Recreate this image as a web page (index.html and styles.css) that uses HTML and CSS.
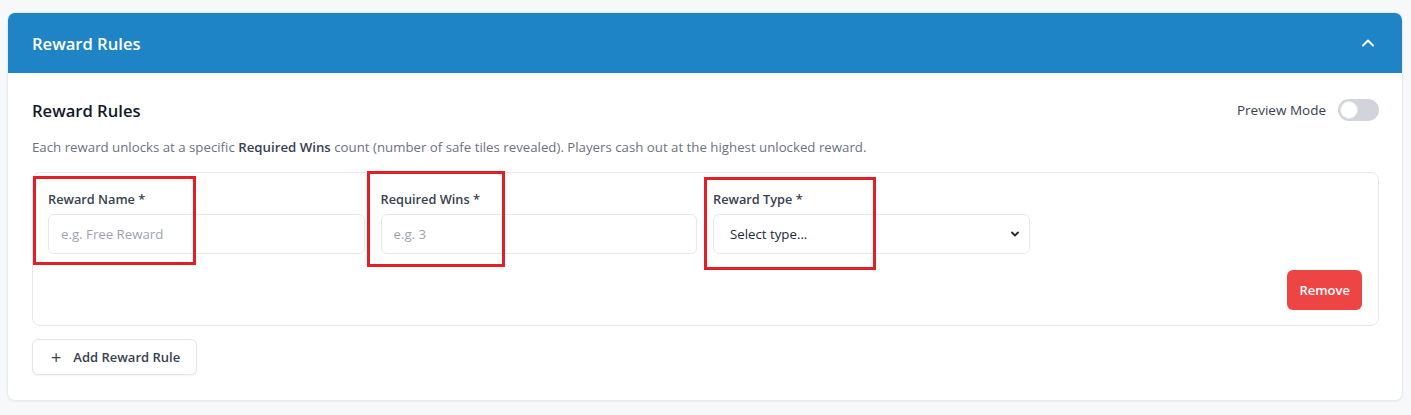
FILE: index.html
```html
<!DOCTYPE html>
<html lang="en">
<head>
<meta charset="utf-8">
<title>Reward Rules</title>
<link rel="stylesheet" href="styles.css">
</head>
<body>
<div class="page">
  <section class="card">
    <header class="card-header">
      <h2 class="card-title">Reward Rules</h2>
      <svg class="chevron" width="16" height="16" viewBox="0 0 16 16" fill="none" stroke="#fff" stroke-width="2" stroke-linecap="round" stroke-linejoin="round"><path d="M3 10.5 8 5.5l5 5"/></svg>
    </header>
    <div class="card-body">
      <div class="title-row">
        <h3 class="section-title">Reward Rules</h3>
        <div class="preview">
          <span class="preview-label">Preview Mode</span>
          <span class="toggle"><span class="knob"></span></span>
        </div>
      </div>
      <p class="desc">Each reward unlocks at a specific <strong>Required Wins</strong> count (number of safe tiles revealed). Players cash out at the highest unlocked reward.</p>
      <div class="rule">
        <div class="fields">
          <div class="field">
            <label class="label">Reward Name *</label>
            <div class="input placeholder">e.g. Free Reward</div>
          </div>
          <div class="field">
            <label class="label">Required Wins *</label>
            <div class="input placeholder">e.g. 3</div>
          </div>
          <div class="field">
            <label class="label">Reward Type *</label>
            <div class="input select">
              <span>Select type...</span>
              <svg width="12" height="12" viewBox="0 0 12 12" fill="none" stroke="#1f2937" stroke-width="1.8" stroke-linecap="round" stroke-linejoin="round"><path d="M3 4.5 6 7.5 9 4.5"/></svg>
            </div>
          </div>
        </div>
        <div class="actions">
          <button class="btn-remove">Remove</button>
        </div>
      </div>
      <button class="btn-add"><span class="plus">+</span>Add Reward Rule</button>
    </div>
  </section>
  <div class="mark mark-1"></div>
  <div class="mark mark-2"></div>
  <div class="mark mark-3"></div>
</div>
</body>
</html>
```
FILE: styles.css
```css
* { box-sizing: border-box; }
html, body { margin: 0; padding: 0; }
body {
  background: #f7f8fa;
  font-family: "Open Sans", "Noto Sans", sans-serif;
  color: #1f2937;
}
.page {
  position: relative;
  padding: 12px 8px 14px 7px;
}
.card {
  background: #fff;
  border-radius: 8px;
  border: 1px solid #e8eaee;
  box-shadow: 0 1px 2px rgba(0,0,0,0.05);
  overflow: hidden;
}
.card-header {
  background: #1f84c6;
  height: 60px;
  display: flex;
  align-items: center;
  justify-content: space-between;
  padding: 0 26px 0 24px;
}
.card-title {
  margin: 0;
  color: #fff;
  font-size: 16.6px;
  font-weight: 600;
}
.chevron { display: block; }
.card-body {
  padding: 24px 23px 25px 24px;
}
.title-row {
  display: flex;
  align-items: center;
  justify-content: space-between;
  height: 26px;
}
.section-title {
  margin: 0;
  font-size: 16.6px;
  font-weight: 600;
  color: #111827;
}
.preview {
  display: flex;
  align-items: center;
  gap: 12px;
}
.preview-label {
  font-size: 13.5px;
  color: #374151;
}
.toggle {
  width: 41px;
  height: 22px;
  border-radius: 11px;
  background: #d1d5db;
  display: flex;
  align-items: center;
  padding: 2px;
}
.knob {
  width: 18px;
  height: 18px;
  border-radius: 50%;
  background: #fff;
  border: 1px solid #e5e7eb;
}
.desc {
  margin: 14px 0 15px;
  font-size: 13.25px;
  line-height: 20px;
  color: #6b7280;
}
.desc strong { color: #374151; font-weight: 600; }
.rule {
  border: 1px solid #e5e7eb;
  border-radius: 8px;
  padding: 16px 16px 15px 15px;
}
.fields {
  display: grid;
  grid-template-columns: repeat(4, 1fr);
  gap: 16px;
}
.field { display: flex; flex-direction: column; gap: 4px; }
.label {
  font-size: 12.75px;
  line-height: 21px;
  font-weight: 600;
  color: #374151;
}
.input {
  height: 40px;
  border: 1px solid #e5e7eb;
  border-radius: 6px;
  padding: 0 12px;
  display: flex;
  align-items: center;
  font-size: 13.25px;
  background: #fff;
}
.placeholder { color: #9ca3af; }
.select {
  color: #1f2937;
  justify-content: space-between;
  padding-right: 8px;
  padding-left: 16px;
}
.actions {
  display: flex;
  justify-content: flex-end;
  margin-top: 16px;
}
.btn-remove {
  height: 40px;
  padding: 0 12px;
  border: none;
  border-radius: 6px;
  background: #ef4444;
  color: #fff;
  font-family: inherit;
  font-size: 13px;
  font-weight: 600;
}
.btn-add {
  margin-top: 13px;
  height: 36px;
  padding: 0 16px 0 18px;
  border: 1px solid #e1e4e8;
  border-radius: 6px;
  background: #fff;
  color: #374151;
  font-family: inherit;
  font-size: 13px;
  font-weight: 600;
  display: inline-flex;
  align-items: center;
  box-shadow: 0 1px 2px rgba(0,0,0,0.05);
}
.plus {
  font-size: 18px;
  font-weight: 400;
  margin-right: 12px;
  line-height: 1;
}
.mark {
  position: absolute;
  border: 3px solid #e31e24;
}
.mark-1 { left: 33px; top: 176px; width: 163px; height: 89px; }
.mark-2 { left: 367px; top: 171px; width: 138px; height: 96px; }
.mark-3 { left: 704px; top: 177px; width: 172px; height: 93px; }
```
